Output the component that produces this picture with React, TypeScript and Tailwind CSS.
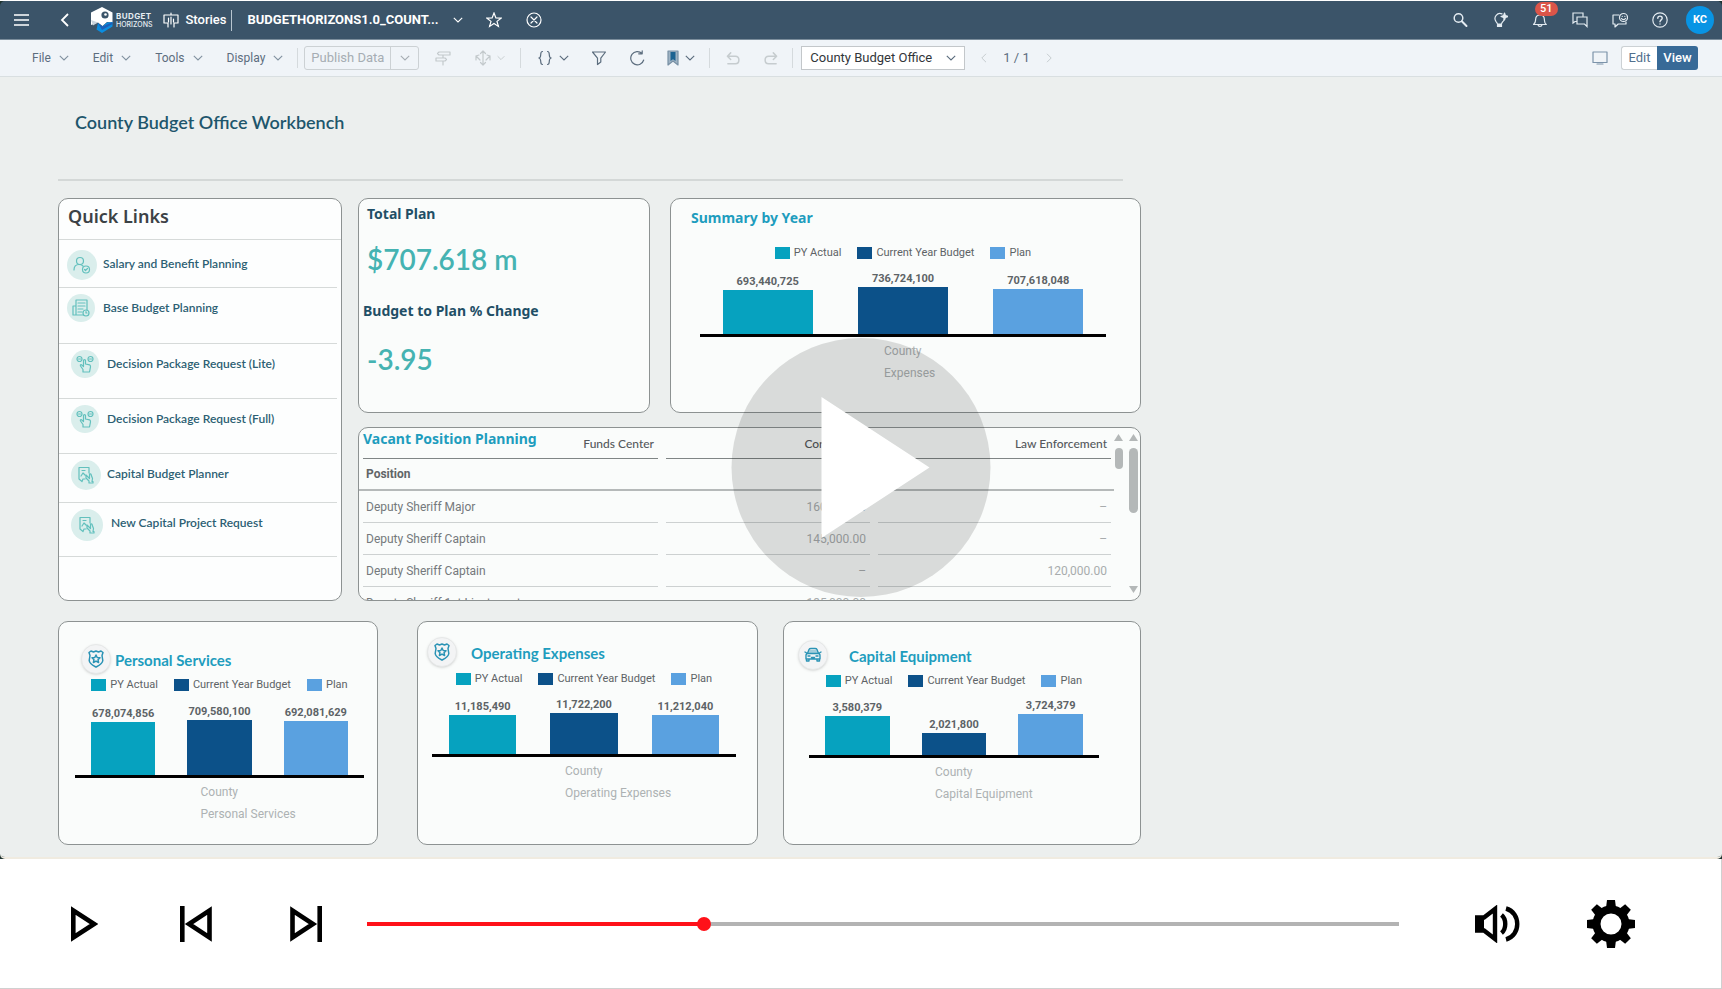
import { useState } from "react";
import type { ReactNode } from "react";

type Bar = { label: string; value: number; color: string };

const seriesStyle = [
  { label: "PY Actual", color: "bg-[#06a2bf]" },
  { label: "Current Year Budget", color: "bg-[#0c5189]" },
  { label: "Plan", color: "bg-[#5aa1e0]" },
];

const menus = ["File", "Edit", "Tools", "Display"];

const quickLinks = [
  { label: "Salary and Benefit Planning", icon: "person", row: "h-12 pt-2.5", slot: "w-11 pl-2", circle: "size-[30px]" },
  { label: "Base Budget Planning", icon: "report", row: "h-14 pt-1.5", slot: "w-11 pl-2", circle: "size-7" },
  { label: "Decision Package Request (Lite)", icon: "choice", row: "h-[55px] pt-1.5", slot: "w-12 pl-3", circle: "size-7" },
  { label: "Decision Package Request (Full)", icon: "choice", row: "h-[55px] pt-1.5", slot: "w-12 pl-3", circle: "size-7" },
  { label: "Capital Budget Planner", icon: "sign", row: "h-[49px] pt-1.5", slot: "w-12 pl-3", circle: "size-[30px]" },
  { label: "New Capital Project Request", icon: "sign", row: "h-[54px] pt-1.5", slot: "w-[52px] pl-3", circle: "size-8" },
];

const positions = [
  { name: "Deputy Sheriff Major", corrections: "160,000.00", law: "–" },
  { name: "Deputy Sheriff Captain", corrections: "145,000.00", law: "–" },
  { name: "Deputy Sheriff Captain", corrections: "–", law: "120,000.00" },
  { name: "Deputy Sheriff 1st Lieutenant", corrections: "135,000.00", law: "" },
];

function toBars(values: number[]): Bar[] {
  return values.map((value, i) => ({ value, ...seriesStyle[i] }));
}

function Svg({ size = 16, box = 16, width = 1.2, className = "", children }: { size?: number; box?: number; width?: number; className?: string; children: ReactNode }) {
  return (
    <svg
      width={size}
      height={size}
      viewBox={`0 0 ${box} ${box}`}
      fill="none"
      stroke="currentColor"
      strokeWidth={width}
      strokeLinecap="round"
      strokeLinejoin="round"
      aria-hidden="true"
      className={`shrink-0 ${className}`}
    >
      {children}
    </svg>
  );
}

function Chevron({ className = "" }: { className?: string }) {
  return (
    <svg width="10" height="6" viewBox="0 0 10 6" fill="none" stroke="currentColor" strokeWidth="1.1" aria-hidden="true" className={`shrink-0 ${className}`}>
      <path d="M.8.8 5 5 9.200.8" />
    </svg>
  );
}

function Logo() {
  return (
    <a href="#home" aria-label="Budget Horizons" className="ml-[22px] flex items-center gap-[3px]">
      <svg width="22" height="26" viewBox="0 0 22 26" aria-hidden="true">
        <path d="M11 0 21.500 5.500v10L16 15l-4.500 4L7 15.500 0 18V5.500Z" fill="#fff" />
        <circle cx="14" cy="8" r="3.600" fill="#3b5469" />
        <circle cx="14.500" cy="7.500" r="1.300" fill="#fff" />
        <path d="m0 13 7 2.500-5 3Z" fill="#c9d5de" />
        <path d="M7 16l4.500 3.500L16 15.500l5.500-.5v4.500L11 26l-5.500-3.500Z" fill="#0a8de0" />
        <path d="m7 16 4.500 3.500L21.500 15v2L11 23Z" fill="#1d5fb8" />
      </svg>
      <span className="flex flex-col gap-px font-['Inter',sans-serif] text-[8px] leading-[8px] font-bold tracking-wider text-[#e6edf2]">
        <span>BUDGET</span>
        <span className="text-[7px] leading-[7px] font-medium tracking-normal">HORIZONS</span>
      </span>
    </a>
  );
}

function ShellHeader() {
  return (
    <header className="flex h-[39px] items-center border-b border-[#7b8d9b] bg-[#3b5469] pr-2 pl-3 text-white">
      <button type="button" aria-label="Menu" className="flex w-[18px] justify-center">
        <svg width="15" height="12" viewBox="0 0 15 12" stroke="currentColor" strokeWidth="1.600" aria-hidden="true">
          <path d="M0 1h15M0 6h15M0 11h15" />
        </svg>
      </button>
      <button type="button" aria-label="Back" className="ml-[30px]">
        <svg width="9" height="14" viewBox="0 0 9 14" fill="none" stroke="currentColor" strokeWidth="1.800" aria-hidden="true">
          <path d="M8 1 2 7l6 6" />
        </svg>
      </button>
      <Logo />
      <a href="#stories" className="ml-[11px] flex items-center gap-[6px] text-[13px] font-medium">
        <Svg>
          <path d="M5 11H1V3h14v8h-4M8 1v2M5 11v4M11 11v4M5.500 6v4M8 5v7M10.500 7v3" />
        </Svg>
        Stories
      </a>
      <span className="ml-[5px] h-[21px] w-px bg-[#b8c5cf]" />
      <button type="button" className="ml-[15px] flex items-center gap-[14px] text-[13px] font-bold">
        BUDGETHORIZONS1.0_COUNT...
        <Chevron />
      </button>
      <button type="button" aria-label="Add to favorites" className="ml-[23px]">
        <Svg>
          <path d="m8 1 1.900 4.900 5.200.2-4.100 3.300 1.400 5L8 11.500l-4.400 2.900 1.400-5L.9 6.100l5.200-.2Z" strokeLinejoin="miter" />
        </Svg>
      </button>
      <button type="button" aria-label="Close story" className="ml-6">
        <Svg>
          <circle cx="8" cy="8" r="7" />
          <path d="m5 5 6 6M11 5l-6 6" />
        </Svg>
      </button>

      <div className="ml-auto flex items-center gap-6 text-[#e3ebf1]">
        <button type="button" aria-label="Search">
          <Svg width={1.5}>
            <circle cx="6.500" cy="6" r="4.300" />
            <path d="m9.800 9.300 4.700 4.700" strokeWidth="2" />
          </Svg>
        </button>
        <button type="button" aria-label="Just Ask">
          <Svg>
            <path d="M10 1.900A5 5 0 0 0 3.900 9.300c1 1.200 1.400 1.700 1.600 2.700h4c.1-1 .8-1.700 1.600-2.700.5-.5.9-1.200 1-2" />
            <path d="M12.500 1 13.400 3.600 16 4.500l-2.600.9-.9 2.600-.9-2.600L9 4.500l2.600-.9Z" fill="currentColor" />
            <path d="M5.500 12.500h4v2h-4Z" fill="currentColor" />
          </Svg>
        </button>
        <button type="button" aria-label="Notifications, 51 unread" className="relative">
          <Svg>
            <path d="M1.500 12.500h12.800c-2-1.500-1.800-3-1.900-5C12.300 4.500 10.500 3 8 3S3.700 4.500 3.600 7.500c-.1 2 .1 3.500-2.100 5ZM6 12.800c.4 2 3.600 2 4 0" />
          </Svg>
          <span className="absolute -top-[10px] left-[3px] rounded-full bg-[#dc5549] px-[5px] text-[11px] leading-[14px] font-medium text-white">51</span>
        </button>
        <button type="button" aria-label="Discussions">
          <Svg>
            <path d="M4.500 9.500H3L1 11V1h10v3M5 5h10v9.500L12.500 12H5Z" strokeLinejoin="miter" />
          </Svg>
        </button>
        <button type="button" aria-label="Assistant">
          <Svg>
            <path d="M7 3H1v9h2v3l3.200-3H14v-2" />
            <circle cx="11.500" cy="5.500" r="4" />
            <path d="M9.500 6.500c.8 1.500 3.200 1.500 4 0M10.200 4.300h.1M12.800 4.300h.1" />
          </Svg>
        </button>
        <button type="button" aria-label="Help">
          <Svg>
            <circle cx="8" cy="8" r="7.200" />
            <path d="M5.800 6.200C5.800 3.400 10.300 3.400 10.200 6.200 10.200 7.900 8 7.800 8 9.800M8 12v.1" strokeWidth="1.400" />
          </Svg>
        </button>
        <button type="button" aria-label="Profile" className="-ml-1.5 size-7 rounded-full bg-[#0894e4] text-[11px] font-bold text-white">
          KC
        </button>
      </div>
    </header>
  );
}

function Divider({ className = "" }: { className?: string }) {
  return <span className={`h-5 w-px shrink-0 bg-[#d5dadd] ${className}`} />;
}

function Toolbar() {
  return (
    <div className="flex h-[37px] items-center border-b border-[#d9dfe1] bg-[#f0f4f8] pr-6 pl-8 text-[13px] text-[#5c6d7e]">
      <div className="flex items-center gap-6 text-xs">
        {menus.map((label) => (
          <button key={label} type="button" className="flex items-center gap-2">
            {label}
            <Chevron className="text-[#8292a0]" />
          </button>
        ))}
      </div>
      <Divider className="ml-[14px]" />
      <div className="ml-[6px] flex h-6 rounded-[3px] border border-[#ccd1d4] text-[#a6adb3]">
        <button type="button" className="px-1.5">
          Publish Data
        </button>
        <button type="button" aria-label="Publish options" className="flex w-7 items-center justify-center border-l border-[#ccd1d4]">
          <Chevron />
        </button>
      </div>
      <button type="button" aria-label="Version management" className="ml-4 text-[#c3c9cc]">
        <Svg>
          <path d="M4 2h11v3H4L2.500 3.500ZM1 8h9l1.500 1.500L10 11H1ZM8 5v3M8 11v4" />
        </Svg>
      </button>
      <button type="button" aria-label="Allocate" className="ml-6 flex items-center gap-1.5 text-[#c3c9cc]">
        <Svg>
          <path d="M8 1v14M5.500 3.500 8 1l2.500 2.500M5.500 12.500 8 15l2.500-2.500M1 10V6l3-1M1 6l4 4M15 10V6l-3-1M15 6l-4 4" />
        </Svg>
        <Chevron className="w-2" />
      </button>
      <Divider className="ml-[15px]" />
      <button type="button" aria-label="Formula" className="ml-4 flex items-center gap-[6px]">
        <Svg>
          <path d="M5.500 1.500C2 1.500 5.500 7.500 1.800 8c3.700.5.2 6.500 3.700 6.500M10.500 1.500c3.500 0 0 6 3.700 6.500-3.700.5-.2 6.500-3.700 6.500" />
        </Svg>
        <Chevron />
      </button>
      <button type="button" aria-label="Filter" className="ml-[22px]">
        <Svg>
          <path d="M1.500 2h13L9.800 8.200V12l-3.300 2.500V8.200Z" />
        </Svg>
      </button>
      <button type="button" aria-label="Refresh" className="ml-[22px]">
        <Svg>
          <path d="M13 3.500A6.600 6.600 0 1 0 14.700 10M13.200.8v3h-3.500" />
        </Svg>
      </button>
      <button type="button" aria-label="Bookmarks" className="ml-5 flex items-center gap-1">
        <Svg>
          <path d="M3 1h10v14l-5-4-5 4Z" fill="#9fb3c4" stroke="#7890a5" />
          <path d="M5.500 2h5v9L8 9.300 5.500 11Z" fill="#1d6391" strokeWidth="0" />
        </Svg>
        <Chevron />
      </button>
      <Divider className="ml-[14px]" />
      <button type="button" aria-label="Undo" className="ml-4 text-[#c6cccf]">
        <Svg size={15} width={1.600}>
          <path d="M5 2 1.500 5.500 5 9M1.500 5.500H10c5 0 5 8 0 8H2" />
        </Svg>
      </button>
      <button type="button" aria-label="Redo" className="ml-[22px] text-[#c6cccf]">
        <Svg size={15} width={1.600}>
          <path d="m11 2 3.500 3.500L11 9M14.500 5.500H6c-5 0-5 8 0 8h8" />
        </Svg>
      </button>
      <Divider className="ml-[14px]" />
      <div className="relative ml-2 w-[164px]">
        <select aria-label="Page" className="h-6 w-full appearance-none border border-[#c3c7ca] bg-white pr-6 pl-2 text-[13px] text-[#32363a]">
          <option>County Budget Office</option>
        </select>
        <Chevron className="pointer-events-none absolute top-[9px] right-[9px]" />
      </div>
      <button type="button" aria-label="Previous page" className="ml-4 text-[#c6cccf]">
        <svg width="6" height="10" viewBox="0 0 6 10" fill="none" stroke="currentColor" aria-hidden="true">
          <path d="M5 .8.8 5 5 9.200" />
        </svg>
      </button>
      <span className="ml-4">1 / 1</span>
      <button type="button" aria-label="Next page" className="ml-4 text-[#c6cccf]">
        <svg width="6" height="10" viewBox="0 0 6 10" fill="none" stroke="currentColor" aria-hidden="true">
          <path d="M1 .8 5.200 5 1 9.200" />
        </svg>
      </button>

      <button type="button" aria-label="Device preview" className="ml-auto text-[#7c93aa]">
        <Svg>
          <path d="M1 2h14v10.500H1ZM5 14h6" />
        </Svg>
      </button>
      <div className="ml-[13px] flex h-6">
        <button type="button" className="w-9 rounded-l-[3px] border border-r-0 border-[#ccd1d4] bg-white text-[#52708e]">
          Edit
        </button>
        <button type="button" aria-pressed="true" className="w-[41px] rounded-r-[3px] bg-[#386a97] font-medium text-white">
          View
        </button>
      </div>
    </div>
  );
}

function LinkGlyph({ name }: { name: string }) {
  if (name === "person") {
    return (
      <Svg size={18} box={18}>
        <circle cx="7" cy="5" r="3.500" />
        <path d="M1 14c0-3.500 2-5.500 5-5.500 2 0 3 .5 4 1.500" />
        <circle cx="13" cy="13.500" r="3.500" />
        <path d="m11.500 13.500 1 1 2-2" />
      </Svg>
    );
  }
  if (name === "report") {
    return (
      <Svg size={18} box={18}>
        <path d="M4 1h11v10M4 1v15h7M4 7H1v9h3M6 4h7M6 7h7M6 10h5M6 13h4" />
        <circle cx="14" cy="14" r="3" />
        <path d="M14 12.500V14h1" />
      </Svg>
    );
  }
  if (name === "choice") {
    return (
      <Svg size={18} box={18}>
        <circle cx="3.500" cy="4" r="2.500" />
        <circle cx="14.500" cy="4" r="2.500" />
        <path d="M2.500 4h2M13.500 4h2M7 17v-2.500L4.500 11c-.6-1 .6-1.800 1.300-1L7.500 11.500V5.500c0-1.300 2-1.300 2 0V9l4 .8c1 .3 1 1 1 2L13.500 17Z" />
      </Svg>
    );
  }
  return (
    <Svg size={18} box={18}>
      <path d="M12 7V1.500H2V13l3 2.500 1-2.500H8M5 4.500h3M4 10l2-3 2 2M9 9l3.500 3.500V8.500c0-1 1.500-1 1.500 0l1.500 4-.5 3h1V17h-4v-2L9 12Z" />
    </Svg>
  );
}

function Card({ className = "", children }: { className?: string; children: ReactNode }) {
  return <section className={`rounded-[10px] border border-[#8d9292] bg-[#fafcfb] ${className}`}>{children}</section>;
}

function QuickLinks() {
  return (
    <Card className="w-[284px] shrink-0 bg-[#fdfefe]">
      <h2 className="h-[41px] border-b border-[#d6dad9] pl-[9px] font-['Noto_Sans',sans-serif] text-lg leading-[34px] font-semibold text-[#3c4246]">
        Quick Links
      </h2>
      <ul>
        {quickLinks.map((link) => (
          <li key={link.label} className={`mr-1 flex items-start border-b border-[#d6dad9] ${link.row}`}>
            <span className={`shrink-0 ${link.slot}`}>
              <span className={`flex items-center justify-center rounded-full bg-[#daeeec] text-[#62c0bd] ${link.circle}`}>
                <LinkGlyph name={link.icon} />
              </span>
            </span>
            <a href="#link" className="font-['Lato',sans-serif] text-xs leading-7 font-semibold whitespace-nowrap text-[#2c5f73]">
              {link.label}
            </a>
          </li>
        ))}
      </ul>
    </Card>
  );
}

function Kpis() {
  return (
    <Card className="w-[292px] shrink-0 pt-[5px] pb-[35px] pl-1">
      <h2 className="pl-1 font-['Noto_Sans',sans-serif] text-sm leading-5 font-bold text-[#1f4f66]">Total Plan</h2>
      <p className="mt-[17px] pl-1 font-['Lato',sans-serif] text-[28px] leading-9 font-semibold text-[#45b3b2]">$707.618 m</p>
      <h2 className="mt-6 font-['Noto_Sans',sans-serif] text-sm leading-5 font-bold text-[#1f4f66]">Budget to Plan % Change</h2>
      <p className="mt-5 pl-1 font-['Lato',sans-serif] text-[28px] leading-9 font-semibold text-[#45b3b2]">-3.95</p>
    </Card>
  );
}

function BarChart({ values, peak, plot, caption, className }: { values: number[]; peak: number; plot: string; caption: string; className: string }) {
  const bars = toBars(values);
  const max = Math.max(...values);
  return (
    <figure className={`text-[#5d6366] ${className}`}>
      <div className="flex justify-center gap-4 text-[11px] leading-4">
        {bars.map((bar) => (
          <span key={bar.label} className="flex items-center gap-1 whitespace-nowrap">
            <span className={`h-3 w-[15px] ${bar.color}`} />
            {bar.label}
          </span>
        ))}
      </div>
      <div className={`grid grid-cols-3 items-end border-b-[3px] border-black box-content ${plot}`}>
        {bars.map((bar) => (
          <div key={bar.label} className="flex flex-col items-center">
            <span className="mb-px text-[11px] leading-[14px] font-bold">{bar.value.toLocaleString("en-US")}</span>
            <span className={`w-2/3 ${bar.color}`} style={{ height: Math.round((bar.value / max) * peak) }} />
          </div>
        ))}
      </div>
      <figcaption className="flex justify-center pt-[3px] text-xs leading-[22px] text-[#adb2b3]">
        <span className="flex w-[38px] flex-col whitespace-nowrap">
          <span>County</span>
          <span>{caption}</span>
        </span>
      </figcaption>
    </figure>
  );
}

function ScrollArrow({ down = false }: { down?: boolean }) {
  return (
    <svg width="9" height="7" viewBox="0 0 9 7" fill="#b4b8b8" aria-hidden="true" className={down ? "rotate-180" : ""}>
      <path d="M4.500 0 9 7H0Z" />
    </svg>
  );
}

function VacantPositions() {
  const line = "border-b border-[#cdd1d1]";
  const headLine = "border-b border-[#7f8585]";
  return (
    <Card className="flex h-[174px] overflow-hidden">
      <table className="min-w-0 flex-1 table-fixed border-separate border-spacing-0 text-xs text-[#75797c]">
        <colgroup>
          <col className="w-1" />
          <col className="w-[295px]" />
          <col className="w-2" />
          <col className="w-[204px]" />
          <col className="w-2" />
          <col className="w-[233px]" />
          <col className="w-[3px]" />
        </colgroup>
        <thead className="text-left">
          <tr className="h-[31px] font-['Lato',sans-serif] text-xs text-[#55595c]">
            <td />
            <th className={`${headLine} p-0 font-medium`}>
              <div className="flex items-center justify-between pr-1">
                <span className="pb-2 font-['Noto_Sans',sans-serif] text-sm leading-5 font-bold text-[#1e9dbe]">Vacant Position Planning</span>
                <span className="pt-0.5">Funds Center</span>
              </div>
            </th>
            <td />
            <th className={`${headLine} p-0 pt-0.5 pr-1 text-right font-medium`}>Corrections</th>
            <td className={headLine} />
            <th className={`${headLine} p-0 pt-0.5 pr-1 text-right font-medium`}>Law Enforcement</th>
            <td />
          </tr>
          <tr className="h-8">
            <th colSpan={7} className="border-b-2 border-[#b5b9b9] p-0 pl-[7px] font-bold text-[#616568]">
              Position
            </th>
          </tr>
        </thead>
        <tbody>
          {positions.map((row, i) => (
            <tr key={i} className="h-8">
              <td />
              <td className={`${line} p-0 pl-[3px]`}>{row.name}</td>
              <td />
              <td className={`${line} p-0 pr-1 text-right text-[#a8acad]`}>{row.corrections}</td>
              <td />
              <td className={`${line} p-0 pr-1 text-right text-[#a8acad]`}>{row.law}</td>
              <td />
            </tr>
          ))}
        </tbody>
      </table>
      <div className="flex w-[9px] shrink-0 flex-col items-center pt-1.5">
        <ScrollArrow />
        <span className="mt-[7px] h-[21px] w-2 rounded-full bg-[#b4b8b8]" />
      </div>
      <div className="mr-0.5 ml-[6px] flex w-[9px] shrink-0 flex-col items-center pt-1.5 pb-[7px]">
        <ScrollArrow />
        <span className="mt-[7px] mb-auto h-[65px] w-[9px] rounded-full bg-[#b4b8b8]" />
        <ScrollArrow down />
      </div>
    </Card>
  );
}

function Badge({ children }: { children: ReactNode }) {
  return (
    <span className="flex size-[30px] items-center justify-center rounded-full border border-[#e6e8e8] bg-[#f3f4f5] text-[#2a93b5] shadow-sm">
      {children}
    </span>
  );
}

function ShieldIcon() {
  return (
    <Svg size={18} box={18} width={1.500}>
      <path d="M2 2.500 4 1l2.500 1L9 1l2.500 1L14 1l2 1.500-1 3 .8 5C15.500 14 12 15.500 9 17c-3-1.500-6.500-3-6.800-6.500L3 5.500Z" />
      <path d="m9 5 1.200 2.500 2.800.3-2 1.900.6 2.800L9 11.100l-2.600 1.400.6-2.800-2-1.900 2.800-.3Z" />
    </Svg>
  );
}

function CarIcon() {
  return (
    <Svg size={18} box={18} width={1.400}>
      <path d="M3.500 7.500 5 3.500C5.300 2.800 6 2.500 7 2.500h4c1 0 1.700.3 2 1l1.500 4M1 6l2.500 1.500h11L17 6M2 9.500c0-1.500.8-2 2-2h10c1.200 0 2 .5 2 2v3.500H2ZM2.500 13v2h2.500v-2M13 13v2h2.500v-2M4 10h2M12 10h2M7.500 11.500h3" />
      <path d="M5.500 4h7l1 3h-9Z" fill="currentColor" fillOpacity=".4" strokeWidth="0" />
    </Svg>
  );
}

function Dashboard() {
  return (
    <main className="bg-[#ecefee] px-[58px] pt-[31px] pb-3">
      <div className="w-full max-w-[1083px]">
        <h1 className="mr-[18px] border-b-2 border-[#d4d8d7] pb-[43px] pl-[17px] font-['Lato',sans-serif] text-lg leading-7 font-semibold text-[#1e566c]">
          County Budget Office Workbench
        </h1>
        <div className="mt-[17px] flex gap-4">
          <QuickLinks />
          <div className="flex min-w-0 flex-1 flex-col gap-[14px]">
            <div className="flex gap-5">
              <Kpis />
              <Card className="min-w-0 flex-1 pt-[9px]">
                <h2 className="pl-5 font-['Noto_Sans',sans-serif] text-sm leading-5 font-bold text-[#1e9dbe]">Summary by Year</h2>
                <BarChart values={[693440725, 736724100, 707618048]} peak={47} plot="h-[73px]" caption="Expenses" className="mt-[17px] mr-[34px] ml-[29px]" />
              </Card>
            </div>
            <VacantPositions />
          </div>
        </div>

        <div className="mt-5 flex h-[224px]">
          <Card className="w-[320px] pt-[22px]">
            <h2 className="flex items-center gap-1 pl-[22px] font-['Lato',sans-serif] text-[15px] font-bold text-[#1e9dbe]">
              <Badge><ShieldIcon /></Badge>
              <span className="pt-0.5">Personal Services</span>
            </h2>
            <BarChart values={[678074856, 709580100, 692081629]} peak={55} plot="h-[82px]" caption="Personal Services" className="mt-[3px] mr-[13px] ml-4" />
          </Card>
          <Card className="ml-[39px] w-[341px] pt-[15px]">
            <h2 className="flex items-center gap-[14px] pl-[9px] font-['Lato',sans-serif] text-[15px] font-bold text-[#1e9dbe]">
              <Badge><ShieldIcon /></Badge>
              <span className="pt-0.5">Operating Expenses</span>
            </h2>
            <BarChart values={[11185490, 11722200, 11212040]} peak={41} plot="h-[67px]" caption="Operating Expenses" className="mt-1 mr-[21px] ml-[14px]" />
          </Card>
          <Card className="ml-[25px] w-[358px] pt-[18px]">
            <h2 className="flex items-center gap-[21px] pl-[14px] font-['Lato',sans-serif] text-[15px] font-bold text-[#1e9dbe]">
              <Badge><CarIcon /></Badge>
              <span className="pt-0.5">Capital Equipment</span>
            </h2>
            <BarChart values={[3580379, 2021800, 3724379]} peak={41} plot="h-[66px]" caption="Capital Equipment" className="mt-[3px] mr-[41px] ml-[25px]" />
          </Card>
        </div>
      </div>
    </main>
  );
}

function PlayerBar() {
  const [progress, setProgress] = useState(324);
  const fill = progress / 10;
  return (
    <div className="flex h-[130px] items-center border-r border-b border-[#d0d0d0] bg-white pt-px pr-[85px] pl-[70px] text-black">
      <button type="button" aria-label="Play">
        <svg width="28" height="36" viewBox="0 0 28 36" fill="none" stroke="currentColor" strokeWidth="4.600" aria-hidden="true">
          <path d="M3.300 4.500v27L24 18Z" />
        </svg>
      </button>
      <button type="button" aria-label="Previous" className="ml-[82px]">
        <svg width="32" height="36" viewBox="0 0 32 36" fill="none" stroke="currentColor" strokeWidth="4.600" aria-hidden="true">
          <path d="M2.300 0v36M29.500 4.500v27L9 18Z" />
        </svg>
      </button>
      <button type="button" aria-label="Next" className="ml-[78px]">
        <svg width="32" height="36" viewBox="0 0 32 36" fill="none" stroke="currentColor" strokeWidth="4.600" aria-hidden="true">
          <path d="M29.700 0v36M2.500 4.500v27L23 18Z" />
        </svg>
      </button>
      <input
        type="range"
        aria-label="Seek"
        min="0"
        max="1000"
        value={progress}
        onChange={(e) => setProgress(Number(e.target.value))}
        className="ml-[45px] h-1 min-w-0 flex-1 appearance-none [&::-webkit-slider-thumb]:size-[14px] [&::-webkit-slider-thumb]:appearance-none [&::-webkit-slider-thumb]:rounded-full [&::-webkit-slider-thumb]:bg-[#ff1119]"
        style={{ background: `linear-gradient(to right, #ff1119 ${fill}%, #b3b3b3 ${fill}%)` }}
      />
      <button type="button" aria-label="Volume" className="ml-[76px]">
        <svg width="46" height="38" viewBox="0 0 46 38" fill="none" stroke="currentColor" strokeWidth="4.400" aria-hidden="true">
          <path d="M2 12.500h7L20 4v30L9 25.500H2Z" />
          <path d="M2 12h7v14H2Z" fill="currentColor" strokeWidth="0" />
          <path d="M26.500 10c5 4 5 14 0 18M31 3.500c15 4 15 27 0 31" />
        </svg>
      </button>
      <button type="button" aria-label="Settings" className="ml-[65px]">
        <svg width="50" height="50" viewBox="-25 -25 50 50" aria-hidden="true">
          <circle r="14.500" fill="none" stroke="currentColor" strokeWidth="8" />
          {[0, 45, 90, 135, 180, 225, 270, 315].map((angle) => (
            <path key={angle} d="M-5-16-4-24H4L5-16Z" fill="currentColor" transform={`rotate(${angle})`} />
          ))}
        </svg>
      </button>
    </div>
  );
}

export default function App() {
  return (
    <div className="bg-white pt-px font-['Roboto',sans-serif]">
      <div className="relative bg-[#1f3330]">
        <div className="overflow-hidden rounded-[5px] border-b-2 border-[#f0ebe0]">
          <ShellHeader />
          <Toolbar />
          <Dashboard />
        </div>
        <button type="button" aria-label="Play video" className="absolute top-[337px] left-1/2 size-[259px] -translate-x-1/2 rounded-full bg-black/13">
          <svg viewBox="0 0 259 259" fill="#fff" aria-hidden="true" className="size-full">
            <path d="M90 59v141l108-70.500Z" />
          </svg>
        </button>
      </div>
      <PlayerBar />
    </div>
  );
}
